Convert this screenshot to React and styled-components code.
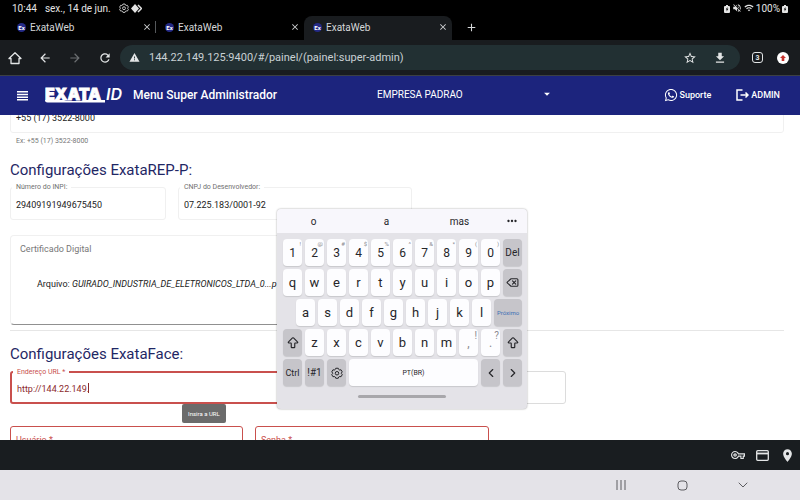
import React from 'react';
import styled, { createGlobalStyle, css } from 'styled-components';
import {
  MdArrowBack, MdArrowForward, MdRefresh, MdWarning, MdStarBorder, MdFileDownload,
  MdOutlineVpnKey, MdLocationOn, MdVolumeOff, MdArrowDropDown, MdClose,
  MdAdd, MdMoreHoriz, MdWifi,
} from 'react-icons/md';
import { FaWhatsapp } from 'react-icons/fa';
import { ArrowBigUp, ChevronLeft, ChevronRight, ChevronDown, Delete } from 'lucide-react';

const GlobalStyle = createGlobalStyle`
  * { box-sizing: border-box; }
  body { margin: 0; font-family: Roboto, sans-serif; background: #fff; }
  button, input, select { font: inherit; color: inherit; margin: 0; padding: 0; border: 0; background: none; }
  button { display: inline-flex; align-items: center; justify-content: center; cursor: pointer; }
  h1, h2, p { margin: 0; font-weight: 400; }
  svg { display: block; flex: none; }
`;

const Screen = styled.div`
  position: relative;
  display: flex;
  flex-direction: column;
  height: 100vh;
  overflow: hidden;
`;

/* System status bar */
const StatusBar = styled.div`
  display: flex;
  align-items: center;
  flex: none;
  height: 16px;
  padding: 0 12px;
  gap: 8px;
  background: #000;
  color: #e4e4e4;
  font-size: 10px;
`;
const StatusIcons = styled.div`
  display: flex;
  align-items: center;
  gap: 2px;
  margin-left: ${(p) => (p.$end ? 'auto' : '0')};
`;

/* Browser chrome */
const TabStrip = styled.div`
  display: flex;
  align-items: stretch;
  flex: none;
  height: 24px;
  padding-left: 8px;
  background: #000;
  color: #d5d7d9;
  font-size: 10px;
`;
const Tab = styled.div`
  display: flex;
  align-items: center;
  flex: 0 1 148px;
  gap: 4px;
  padding: 0 4px 2px 9px;
  border-radius: 8px 8px 0 0;
  background: ${(p) => (p.$active ? '#191c1f' : 'transparent')};
`;
const TabTitle = styled.span`
  flex: 1;
`;
const TabDivider = styled.span`
  width: 1px;
  height: 12px;
  margin: 5px 0 0 -1px;
  background: #55585b;
`;
const Favicon = styled.span`
  width: 9px;
  height: 9px;
  border-radius: 5px;
  background: #242a86;
  color: #fff;
  font-size: 6px;
  font-weight: 700;
  line-height: 9px;
  text-align: center;
`;
const NewTab = styled.button`
  width: 28px;
  padding-bottom: 2px;
  margin-left: 5px;
`;
const Toolbar = styled.div`
  display: flex;
  align-items: center;
  flex: none;
  height: 36px;
  padding: 0 11px 0 7px;
  gap: 14px;
  background: #191c1f;
  border-bottom: 1px solid #3c4043;
  color: #e3e5e6;
`;
const ToolButton = styled.button`
  width: 16px;
  height: 16px;
  color: ${(p) => (p.$dim ? '#6c6f72' : 'inherit')};
`;
const AddressBar = styled.form`
  display: flex;
  align-items: center;
  flex: 1;
  height: 25px;
  gap: 14px;
  margin: 0 -2px 0 -7px;
  padding: 0 12px 0 9px;
  border-radius: 13px;
  background: #223033;
`;
const AddressInput = styled.input`
  flex: 1;
  min-width: 0;
  margin-left: -5px;
  color: #c9d1d3;
  font-size: 11px;
  outline: 0;
`;
const TabCount = styled.button`
  width: 11px;
  height: 11px;
  border: 1px solid #e3e5e6;
  border-radius: 3px;
  font-size: 7px;
  font-weight: 700;
`;
const UpdateBadge = styled.button`
  width: 12px;
  height: 12px;
  border-radius: 6px;
  background: #fff;
`;

/* Application header */
const Header = styled.header`
  display: flex;
  align-items: center;
  flex: none;
  height: 39px;
  padding: 0 20px 0 16px;
  background: #1c247d;
  color: #fff;
`;
const MenuButton = styled.button`
  width: 13px;
  margin-right: 16px;
`;
const PageTitle = styled.h1`
  flex: 0 0 252px;
  padding-left: 8px;
  padding-bottom: 1px;
  font-size: 12px;
  font-weight: 500;
`;
const CompanyPicker = styled.div`
  display: flex;
  align-items: center;
  flex: 0 1 177px;
  padding-bottom: 3px;
`;
const CompanySelect = styled.select`
  flex: 1;
  min-width: 0;
  appearance: none;
  font-size: 10px;
  outline: 0;
`;
const HeaderActions = styled.div`
  display: flex;
  align-items: center;
  gap: 25px;
  margin-left: auto;
  padding-bottom: 1px;
`;
const HeaderLink = styled.a`
  display: flex;
  align-items: center;
  gap: 2px;
  color: #fff;
  font-size: 9px;
  font-weight: 500;
  text-decoration: none;
`;

/* Form page */
const Page = styled.main`
  flex: 1;
  min-height: 0;
  overflow: hidden;
  padding: 0 16px 0 10px;
  color: #222;
`;
const ScrolledField = styled.div`
  display: flex;
  align-items: flex-end;
  height: 18px;
  overflow: hidden;
`;
const Field = styled.div`
  position: relative;
  flex: ${(p) => (p.$width ? `0 1 ${p.$width}px` : '1')};
  height: 33px;
  border-style: solid;
  border-radius: 3px;
  ${(p) => {
    if (p.$focused) return css`border-width: 2px; border-color: #c9504d; color: #8c2a2c;`;
    if (p.$error) return css`border-width: 1px; border-color: #c9504d; color: #b8605e;`;
    return css`border-width: 1px; border-color: ${p.$line || '#f0f0f0'}; color: #222;`;
  }}
`;
const FieldLabel = styled.label`
  position: absolute;
  top: ${(p) => (p.$resting ? '9px' : '-5px')};
  left: 1px;
  padding: 0 4px;
  background: #fff;
  color: ${(p) => (p.$error ? '#c9504d' : '#707070')};
  font-size: ${(p) => (p.$resting ? '9px' : '7px')};
  line-height: 9px;
`;
const FieldInput = styled.input`
  display: block;
  width: 100%;
  height: 100%;
  padding: 2px 5px 0;
  font-size: 9px;
  outline: 0;
`;
const Hint = styled.p`
  padding: 4px 6px 0;
  color: #777;
  font-size: 7px;
  line-height: 9px;
`;
const SectionTitle = styled.h2`
  color: #1f2765;
  font-size: 15px;
  line-height: 20px;
  margin-top: ${(p) => (p.$top || 13)}px;
`;
const FieldRow = styled.div`
  display: flex;
  gap: 12px;
  margin-top: ${(p) => p.$top}px;
`;
const Certificate = styled.section`
  width: 64%;
  height: 90px;
  margin-top: 15px;
  padding: 7px 9px;
  border: 1px solid #f0f0f0;
  border-bottom-color: #909090;
  border-radius: 4px;
  font-size: 9px;
`;
const CertificateTitle = styled.p`
  color: #777;
  line-height: 12px;
`;
const CertificateFile = styled.p`
  padding: 23px 17px;
  line-height: 12px;
`;
const Divider = styled.hr`
  height: 1px;
  margin: 5px 0 0;
  border: 0;
  background: #e6e6e6;
`;
const TooltipAnchor = styled.div`
  position: relative;
`;
const Tooltip = styled.div`
  position: absolute;
  top: 0;
  left: 172px;
  padding: 5px 6px;
  border-radius: 2px;
  background: #6b6b6b;
  color: #fff;
  font-size: 6px;
  line-height: 9px;
`;
const Caret = styled.span`
  position: absolute;
  top: 10px;
  left: 76px;
  width: 1px;
  height: 10px;
  background: #8c2a2c;
`;

/* Floating keyboard */
const Keyboard = styled.section`
  position: absolute;
  left: 277px;
  bottom: 91px;
  width: 250px;
  border-radius: 4px;
  background: #e4e3e8;
  box-shadow: 0 0 2px rgba(0, 0, 0, 0.4);
  color: #26262a;
  overflow: hidden;
`;
const Suggestions = styled.div`
  display: grid;
  grid-template-columns: repeat(3, 1fr) 31px;
  height: 24px;
  background: #f8f7fc;
  font-size: 10px;
`;
const KeyRows = styled.div`
  display: flex;
  flex-direction: column;
  gap: 3px;
  padding: 6px 5px 9px 6px;
`;
const KeyRow = styled.div`
  display: grid;
  grid-template-columns: repeat(11, 1fr);
  gap: 3px;
  padding-left: ${(p) => (p.$indent ? '13px' : '0')};
  ${(p) => p.$indent && css`grid-template-columns: repeat(9, 19px) 1fr;`}
`;
const Key = styled.button`
  && {
    position: relative;
    grid-column: span ${(p) => p.$span || 1};
    height: 27px;
    border-radius: 4px;
    background: ${(p) => (p.$dark ? '#c6c5ca' : '#fdfdff')};
    box-shadow: 0 1px 1px rgba(0, 0, 0, 0.12);
    font-size: ${(p) => p.$size || 12}px;
    color: ${(p) => p.$color || 'inherit'};
    white-space: nowrap;
  }
`;
const KeyHint = styled.sup`
  position: absolute;
  top: 2px;
  right: 1px;
  color: #8a8a90;
  font-size: ${(p) => (p.$large ? '10px' : '6px')};
  line-height: ${(p) => (p.$large ? '10px' : '6px')};
`;
const Handle = styled.div`
  width: 88px;
  height: 3px;
  margin: 0 auto 11px;
  border-radius: 2px;
  background: #a8a7ab;
`;

/* Bottom bars */
const AutofillBar = styled.div`
  display: flex;
  align-items: center;
  justify-content: flex-end;
  flex: none;
  height: 30px;
  padding-right: 5px;
  gap: 11px;
  background: #191d20;
  color: #e3e5e6;
`;
const NavBar = styled.nav`
  display: flex;
  align-items: center;
  justify-content: flex-end;
  flex: none;
  height: 30px;
  padding-right: 50px;
  gap: 47px;
  background: #e4e3e8;
  color: #5c5c60;
`;
const NavButton = styled.button`
  width: 14px;
  height: 14px;
`;

const GearIcon = ({ size }) => (
  <svg width={size} height={size} viewBox="0 0 24 24" fill="none" stroke="currentColor" strokeWidth="2" strokeLinejoin="round">
    <path d="M9.5 2.5h5l1.2 2.7 1.4.8 3-.4 2.4 4.2-1.8 2.2v1l1.8 2.2-2.4 4.2-3-.4-1.4.8-1.2 2.700h-5l-1.200-2.700-1.400-.8-3 .4-2.400-4.200L3.300 13v-1L1.500 9.800l2.400-4.200 3 .4 1.400-.8z" />
    <circle cx="12" cy="12.500" r="3.500" />
  </svg>
);
const DiamondIcon = () => (
  <svg width="11" height="9" viewBox="0 0 11 9">
    <path d="M4 0 8 4.500 4 9 0 4.500z" fill="currentColor" />
    <path d="M7 1l3.500 3.500L7 8" fill="none" stroke="currentColor" strokeWidth="1.500" />
  </svg>
);
const BatteryIcon = () => (
  <svg width="6" height="9" viewBox="0 0 6 9">
    <path d="M2 1h2v1h1a1 1 0 0 1 1 1v5a1 1 0 0 1-1 1H1a1 1 0 0 1-1-1V3a1 1 0 0 1 1-1h1z" fill="currentColor" />
    <path d="M3.400 3 1.800 5.500h1L2.600 7.500l1.700-2.700h-1z" fill="#000" />
  </svg>
);
const HomeIcon = () => (
  <svg width="14" height="14" viewBox="0 0 14 14" fill="none" stroke="currentColor" strokeWidth="1.300">
    <path d="M1 7.500h2v5h8v-5h2L7 1.800z" strokeLinejoin="round" />
  </svg>
);
const MenuIcon = () => (
  <svg width="11" height="10" viewBox="0 0 11 10" fill="currentColor">
    <path d="M0 0h11v1.500H0zM0 2.700h11v1.500H0zM0 5.400h11v1.500H0zM0 8.100h11v1.500H0z" />
  </svg>
);
const CardIcon = () => (
  <svg width="13" height="11" viewBox="0 0 13 11" fill="none" stroke="currentColor" strokeWidth="1.300">
    <rect x="0.700" y="0.700" width="11.600" height="9.600" rx="1" />
    <path d="M1 3.500h11" strokeWidth="1.800" />
  </svg>
);
const ExitIcon = () => (
  <svg width="13" height="12" viewBox="0 0 13 12" fill="none" stroke="currentColor" strokeWidth="1.500">
    <path d="M6.500 1H1v10h5.500" />
    <path d="M4.500 6h7.500M9.500 3.500 12 6 9.500 8.500" />
  </svg>
);
const Logo = () => (
  <svg width="80" height="22" viewBox="0 0 80 22" fill="#fff" role="img" aria-label="EXATA ID">
    <text x="0" y="15" fontFamily="Inter, sans-serif" fontWeight="900" fontSize="16" stroke="#fff" strokeWidth="0.800">EXATA</text>
    <text x="61" y="15" fontFamily="Inter, sans-serif" fontStyle="italic" fontWeight="600" fontSize="16">ID</text>
    <path d="M0 15h19l2 1h15l2-1h22v2.500H2.500q-2.500 0-2.500-2.500z" />
  </svg>
);

const NUMBER_KEYS = [
  ['1', '!'], ['2', '@'], ['3', '#'], ['4', '$'], ['5', '%'],
  ['6', '^'], ['7', '&'], ['8', '*'], ['9', '('], ['0', ')'],
];

const BrowserTab = ({ active }) => (
  <Tab $active={active}>
    <Favicon>Ex</Favicon>
    <TabTitle>ExataWeb</TabTitle>
    <button aria-label="Fechar guia"><MdClose size={10} /></button>
  </Tab>
);

const TextField = ({ id, label, value, caret, ...box }) => (
  <Field {...box}>
    {label && <FieldLabel htmlFor={id} $error={box.$error || box.$focused} $resting={box.$resting}>{label}</FieldLabel>}
    <FieldInput id={id} defaultValue={value} aria-label={label ? undefined : id} />
    {caret && <Caret />}
  </Field>
);

const Letters = ({ keys }) => [...keys].map((k) => <Key key={k} $size={13}>{k}</Key>);

export default function App() {
  return (
    <Screen>
      <GlobalStyle />
      <StatusBar>
        <span>10:44</span>
        <span>sex., 14 de jun.</span>
        <StatusIcons><GearIcon size={10} /><DiamondIcon /></StatusIcons>
        <StatusIcons $end>
          <BatteryIcon />
          <MdVolumeOff size={10} />
          <MdWifi size={10} />
          <span>100%</span>
          <BatteryIcon />
        </StatusIcons>
      </StatusBar>

      <TabStrip>
        <BrowserTab />
        <TabDivider />
        <BrowserTab />
        <BrowserTab active />
        <NewTab aria-label="Nova guia"><MdAdd size={13} /></NewTab>
      </TabStrip>

      <Toolbar>
        <ToolButton aria-label="Início"><HomeIcon /></ToolButton>
        <ToolButton aria-label="Voltar"><MdArrowBack size={14} /></ToolButton>
        <ToolButton aria-label="Avançar" $dim><MdArrowForward size={14} /></ToolButton>
        <ToolButton aria-label="Recarregar"><MdRefresh size={14} /></ToolButton>
        <AddressBar>
          <MdWarning size={11} />
          <AddressInput aria-label="Endereço" defaultValue="144.22.149.125:9400/#/painel/(painel:super-admin)" />
          <ToolButton type="button" aria-label="Favorito"><MdStarBorder size={14} /></ToolButton>
          <ToolButton type="button" aria-label="Baixar"><MdFileDownload size={14} /></ToolButton>
        </AddressBar>
        <TabCount>3</TabCount>
        <UpdateBadge aria-label="Atualizar">
          <svg width="8" height="8" viewBox="0 0 8 8" fill="#c5322d"><path d="M4 1 7 4H5.300v3H2.700V4H1z" /></svg>
        </UpdateBadge>
      </Toolbar>

      <Header>
        <MenuButton aria-label="Menu"><MenuIcon /></MenuButton>
        <Logo />
        <PageTitle>Menu Super Administrador</PageTitle>
        <CompanyPicker>
          <CompanySelect aria-label="Empresa"><option>EMPRESA PADRAO</option></CompanySelect>
          <MdArrowDropDown size={14} />
        </CompanyPicker>
        <HeaderActions>
          <HeaderLink href="#suporte"><FaWhatsapp size={14} />Suporte</HeaderLink>
          <HeaderLink href="#admin"><ExitIcon />ADMIN</HeaderLink>
        </HeaderActions>
      </Header>

      <Page>
        <ScrolledField>
          <TextField id="Telefone" value="+55 (17) 3522-8000" />
        </ScrolledField>
        <Hint>Ex: +55 (17) 3522-8000</Hint>
        <SectionTitle $top={14}>Configurações ExataREP-P:</SectionTitle>
        <FieldRow $top={7}>
          <TextField id="inpi" label="Número do INPI:" value="29409191949675450" $width={156} />
          <TextField id="cnpj" label="CNPJ do Desenvolvedor:" value="07.225.183/0001-92" $width={234} />
        </FieldRow>
        <Certificate>
          <CertificateTitle>Certificado Digital</CertificateTitle>
          <CertificateFile>Arquivo: <em>GUIRADO_INDUSTRIA_DE_ELETRONICOS_LTDA_0...p12</em></CertificateFile>
        </Certificate>
        <Divider />
        <SectionTitle>Configurações ExataFace:</SectionTitle>
        <FieldRow $top={7}>
          <TextField id="url" label="Endereço URL *" value="http://144.22.149." caret $focused $width={310} />
          <TextField id="Porta" value="" $line="#dcdcdc" $width={234} />
        </FieldRow>
        <TooltipAnchor><Tooltip role="tooltip">Insira a URL</Tooltip></TooltipAnchor>
        <FieldRow $top={22}>
          <TextField id="usuario" label="Usuário *" value="" $error $resting $width={233} />
          <TextField id="senha" label="Senha *" value="" $error $resting $width={234} />
        </FieldRow>
      </Page>

      <AutofillBar>
        <button aria-label="Senhas"><MdOutlineVpnKey size={14} /></button>
        <button aria-label="Cartões"><CardIcon /></button>
        <button aria-label="Endereços"><MdLocationOn size={15} /></button>
      </AutofillBar>
      <NavBar>
        <NavButton aria-label="Recentes">
          <svg width="10" height="10" viewBox="0 0 10 10" stroke="currentColor"><path d="M1 0v10M5 0v10M9 0v10" /></svg>
        </NavButton>
        <NavButton aria-label="Tela inicial">
          <svg width="11" height="11" viewBox="0 0 11 11" fill="none" stroke="currentColor"><rect x="1" y="1" width="9" height="9" rx="3" /></svg>
        </NavButton>
        <NavButton aria-label="Ocultar teclado"><ChevronDown size={16} strokeWidth={1.5} /></NavButton>
      </NavBar>

      <Keyboard aria-label="Teclado">
        <Suggestions>
          <button>o</button>
          <button>a</button>
          <button>mas</button>
          <button aria-label="Mais"><MdMoreHoriz size={14} /></button>
        </Suggestions>
        <KeyRows>
          <KeyRow>
            {NUMBER_KEYS.map(([k, hint]) => <Key key={k}>{k}<KeyHint>{hint}</KeyHint></Key>)}
            <Key $dark $size={10}>Del</Key>
          </KeyRow>
          <KeyRow>
            <Letters keys="qwertyuiop" />
            <Key $dark aria-label="Apagar"><Delete size={13} /></Key>
          </KeyRow>
          <KeyRow $indent>
            <Letters keys="asdfghjkl" />
            <Key $dark $size={6} $color="#3f6fb5">Próximo</Key>
          </KeyRow>
          <KeyRow>
            <Key $dark aria-label="Maiúsculas"><ArrowBigUp size={14} /></Key>
            <Letters keys="zxcvbnm" />
            <Key $color="#8a8a90">,<KeyHint $large>!</KeyHint></Key>
            <Key $color="#8a8a90">.<KeyHint $large>?</KeyHint></Key>
            <Key $dark aria-label="Maiúsculas"><ArrowBigUp size={14} /></Key>
          </KeyRow>
          <KeyRow>
            <Key $dark $size={9}>Ctrl</Key>
            <Key $dark $size={10}>!#1</Key>
            <Key $dark aria-label="Configurações"><GearIcon size={12} /></Key>
            <Key $span={6} $size={7}>PT(BR)</Key>
            <Key $dark aria-label="Esquerda"><ChevronLeft size={14} /></Key>
            <Key $dark aria-label="Direita"><ChevronRight size={14} /></Key>
          </KeyRow>
        </KeyRows>
        <Handle />
      </Keyboard>
    </Screen>
  );
}
